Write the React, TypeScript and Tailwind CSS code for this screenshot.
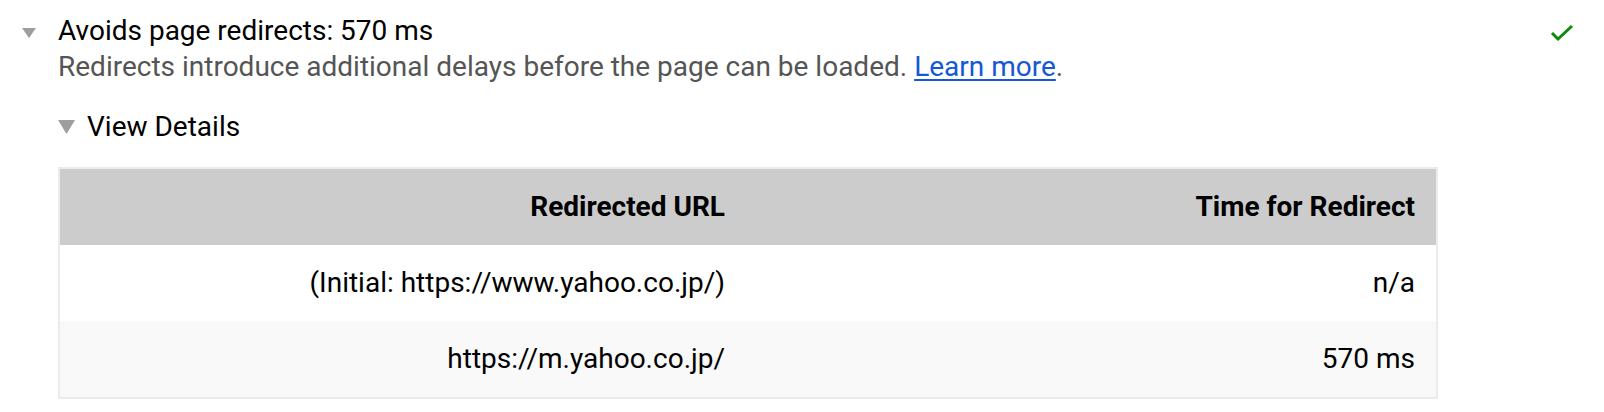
import React from 'react';

interface RedirectRow {
  url: string;
  time: string;
}

const rows: RedirectRow[] = [
  { url: '(Initial: https://www.yahoo.co.jp/)', time: 'n/a' },
  { url: 'https://m.yahoo.co.jp/', time: '570 ms' },
];

const Caret: React.FC<{ w: number; h: number }> = ({ w, h }) => (
  <svg width={w} height={h} viewBox={`0 0 ${w} ${h}`} className="shrink-0">
    <polygon points={`0,0 ${w},0 ${w / 2},${h}`} fill="#9e9e9e" />
  </svg>
);

const App: React.FC = () => {
  return (
    <div className="w-[1604px] h-[412px] bg-white font-['Roboto',sans-serif] text-[28px] leading-[36px] text-black overflow-hidden">
      <div className="flex pt-[13px] pr-[30px]">
        {/* collapse marker */}
        <div className="w-[58px] pl-[22px] pt-[15px]">
          <Caret w={14} h={10} />
        </div>
        <div className="flex-1">
          <div>Avoids page redirects: 570 ms</div>
          <div className="text-[#555555]">
            Redirects introduce additional delays before the page can be loaded.{' '}
            <a href="#" className="text-[#1558d6] underline underline-offset-[3px]">
              Learn more
            </a>
            .
          </div>

          <div className="flex items-center gap-[12px] mt-[24px]">
            <Caret w={17} h={14} />
            <span>View Details</span>
          </div>

          <div className="mt-[22px] w-[1380px] border-2 border-[#ebebeb]">
            <div className="grid grid-cols-2 bg-[#cccccc] h-[76px] font-bold">
              <div className="flex items-center justify-end px-[23px]">Redirected URL</div>
              <div className="flex items-center justify-end px-[21px]">Time for Redirect</div>
            </div>
            {rows.map((row, index) => (
              <div
                key={index}
                className={`grid grid-cols-2 h-[76px] ${index % 2 === 1 ? 'bg-[#f9f9f9]' : 'bg-white'}`}
              >
                <div className="flex items-center justify-end px-[23px]">{row.url}</div>
                <div className="flex items-center justify-end px-[21px]">{row.time}</div>
              </div>
            ))}
          </div>
        </div>
        {/* pass indicator */}
        <svg width="24" height="18" viewBox="0 0 24 18" className="mt-[11px]">
          <path d="M2 9 L8 15 L22 2" fill="none" stroke="#0b8a0b" strokeWidth="3" />
        </svg>
      </div>
    </div>
  );
};

export default App;
